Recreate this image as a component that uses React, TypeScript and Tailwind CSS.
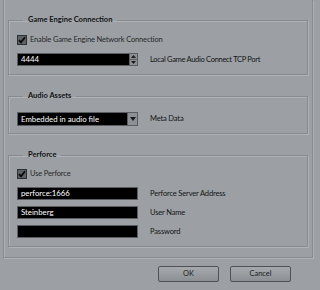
import React from "react";

const font = { fontFamily: 'Lato, "Open Sans", sans-serif' };

function Check() {
  return (
    <div className="w-[10px] h-[10px] bg-[#5e6266] border border-[#2e3134] flex items-center justify-center">
      <svg width="8" height="8" viewBox="0 0 8 8">
        <path d="M1 4.2 L3 6.4 L7 1.2" stroke="#0a0a0a" strokeWidth="1.8" fill="none" />
      </svg>
    </div>
  );
}

function Field({ value, label }: { value: string; label: string }) {
  return (
    <div className="flex items-center">
      <div className="w-[121px] h-[13px] bg-black border border-[#5a5e62] text-white text-[7.8px] leading-[11px] pl-[3px]">
        {value}
      </div>
      <span className="ml-[12px] text-[7.5px] tracking-[-0.15px] text-[#121416]">{label}</span>
    </div>
  );
}

function Group({ title, className, children }: { title: string; className: string; children: React.ReactNode }) {
  return (
    <fieldset className={`border border-[#888c90] shadow-[inset_1px_1px_0_#aeb2b6,1px_1px_0_#aeb2b6] px-[8px] ${className}`}>
      <legend className="ml-[6px] px-[5px] h-[12px] text-[7.5px] leading-[12px] font-bold text-[#101214]">{title}</legend>
      {children}
    </fieldset>
  );
}

export default function App() {
  return (
    <div className="w-[320px] h-[290px] bg-[#9ca0a4] overflow-hidden" style={font}>
      <div className="ml-[3px] w-[310px] border-x border-b border-[#888c90] shadow-[inset_1px_0_0_#aeb2b6,1px_1px_0_#aeb2b6] pl-[4px] pr-[4px] pt-[14px] pb-[10px]">
        <Group title="Game Engine Connection" className="pb-[8px]">
          <div className="mt-[9px] flex items-center h-[10px]">
            <Check />
            <span className="ml-[3px] text-[7.5px] tracking-[-0.15px] text-[#26282a]">Enable Game Engine Network Connection</span>
          </div>
          <div className="mt-[8px] flex items-center">
            <div className="w-[121px] h-[13px] bg-black border border-[#5a5e62] flex">
              <div className="flex-1 text-white text-[7.8px] leading-[11px] pl-[3px]">4444</div>
              <div className="w-[8px] flex flex-col bg-[#8d9195] border-l border-[#5a5e62]">
                <div className="flex-1 flex items-center justify-center border-b border-[#5a5e62]">
                  <svg width="5" height="3" viewBox="0 0 5 3"><path d="M0 3 L2.5 0 L5 3 Z" fill="#1a1a1a" /></svg>
                </div>
                <div className="flex-1 flex items-center justify-center">
                  <svg width="5" height="3" viewBox="0 0 5 3"><path d="M0 0 L2.5 3 L5 0 Z" fill="#1a1a1a" /></svg>
                </div>
              </div>
            </div>
            <span className="ml-[12px] text-[7.5px] tracking-[-0.3px] text-[#121416]">Local Game Audio Connect TCP Port</span>
          </div>
        </Group>

        <Group title="Audio Assets" className="mt-[15px] pb-[7px]">
          <div className="mt-[10px] flex items-center">
            <div className="w-[121px] h-[14px] bg-black border border-[#5a5e62] flex">
              <div className="flex-1 text-white text-[7.8px] leading-[12px] pl-[3px]">Embedded in audio file</div>
              <div className="w-[10px] bg-[#8d9195] border-l border-[#5a5e62] flex items-center justify-center">
                <svg width="6" height="4" viewBox="0 0 6 4"><path d="M0 0 L3 4 L6 0 Z" fill="#1a1a1a" /></svg>
              </div>
            </div>
            <span className="ml-[12px] text-[7.5px] tracking-[-0.15px] text-[#121416]">Meta Data</span>
          </div>
        </Group>

        <Group title="Perforce" className="mt-[15px] pb-[8px]">
          <div className="mt-[8px] flex items-center h-[10px]">
            <Check />
            <span className="ml-[3px] text-[7.5px] tracking-[-0.15px] text-[#26282a]">Use Perforce</span>
          </div>
          <div className="mt-[8px] flex flex-col gap-[6px]">
            <Field value="perforce:1666" label="Perforce Server Address" />
            <Field value="Steinberg" label="User Name" />
            <Field value="" label="Password" />
          </div>
        </Group>
      </div>

      <div className="mt-[8px] flex justify-end gap-[11px] pr-[29px]">
        <button className="w-[61px] h-[16px] rounded-[2px] border border-[#4e5256] bg-gradient-to-b from-[#a6aaae] to-[#8c9094] text-[7.5px] text-[#202224]">OK</button>
        <button className="w-[61px] h-[16px] rounded-[2px] border border-[#4e5256] bg-gradient-to-b from-[#a6aaae] to-[#8c9094] text-[7.5px] text-[#202224]">Cancel</button>
      </div>
    </div>
  );
}
